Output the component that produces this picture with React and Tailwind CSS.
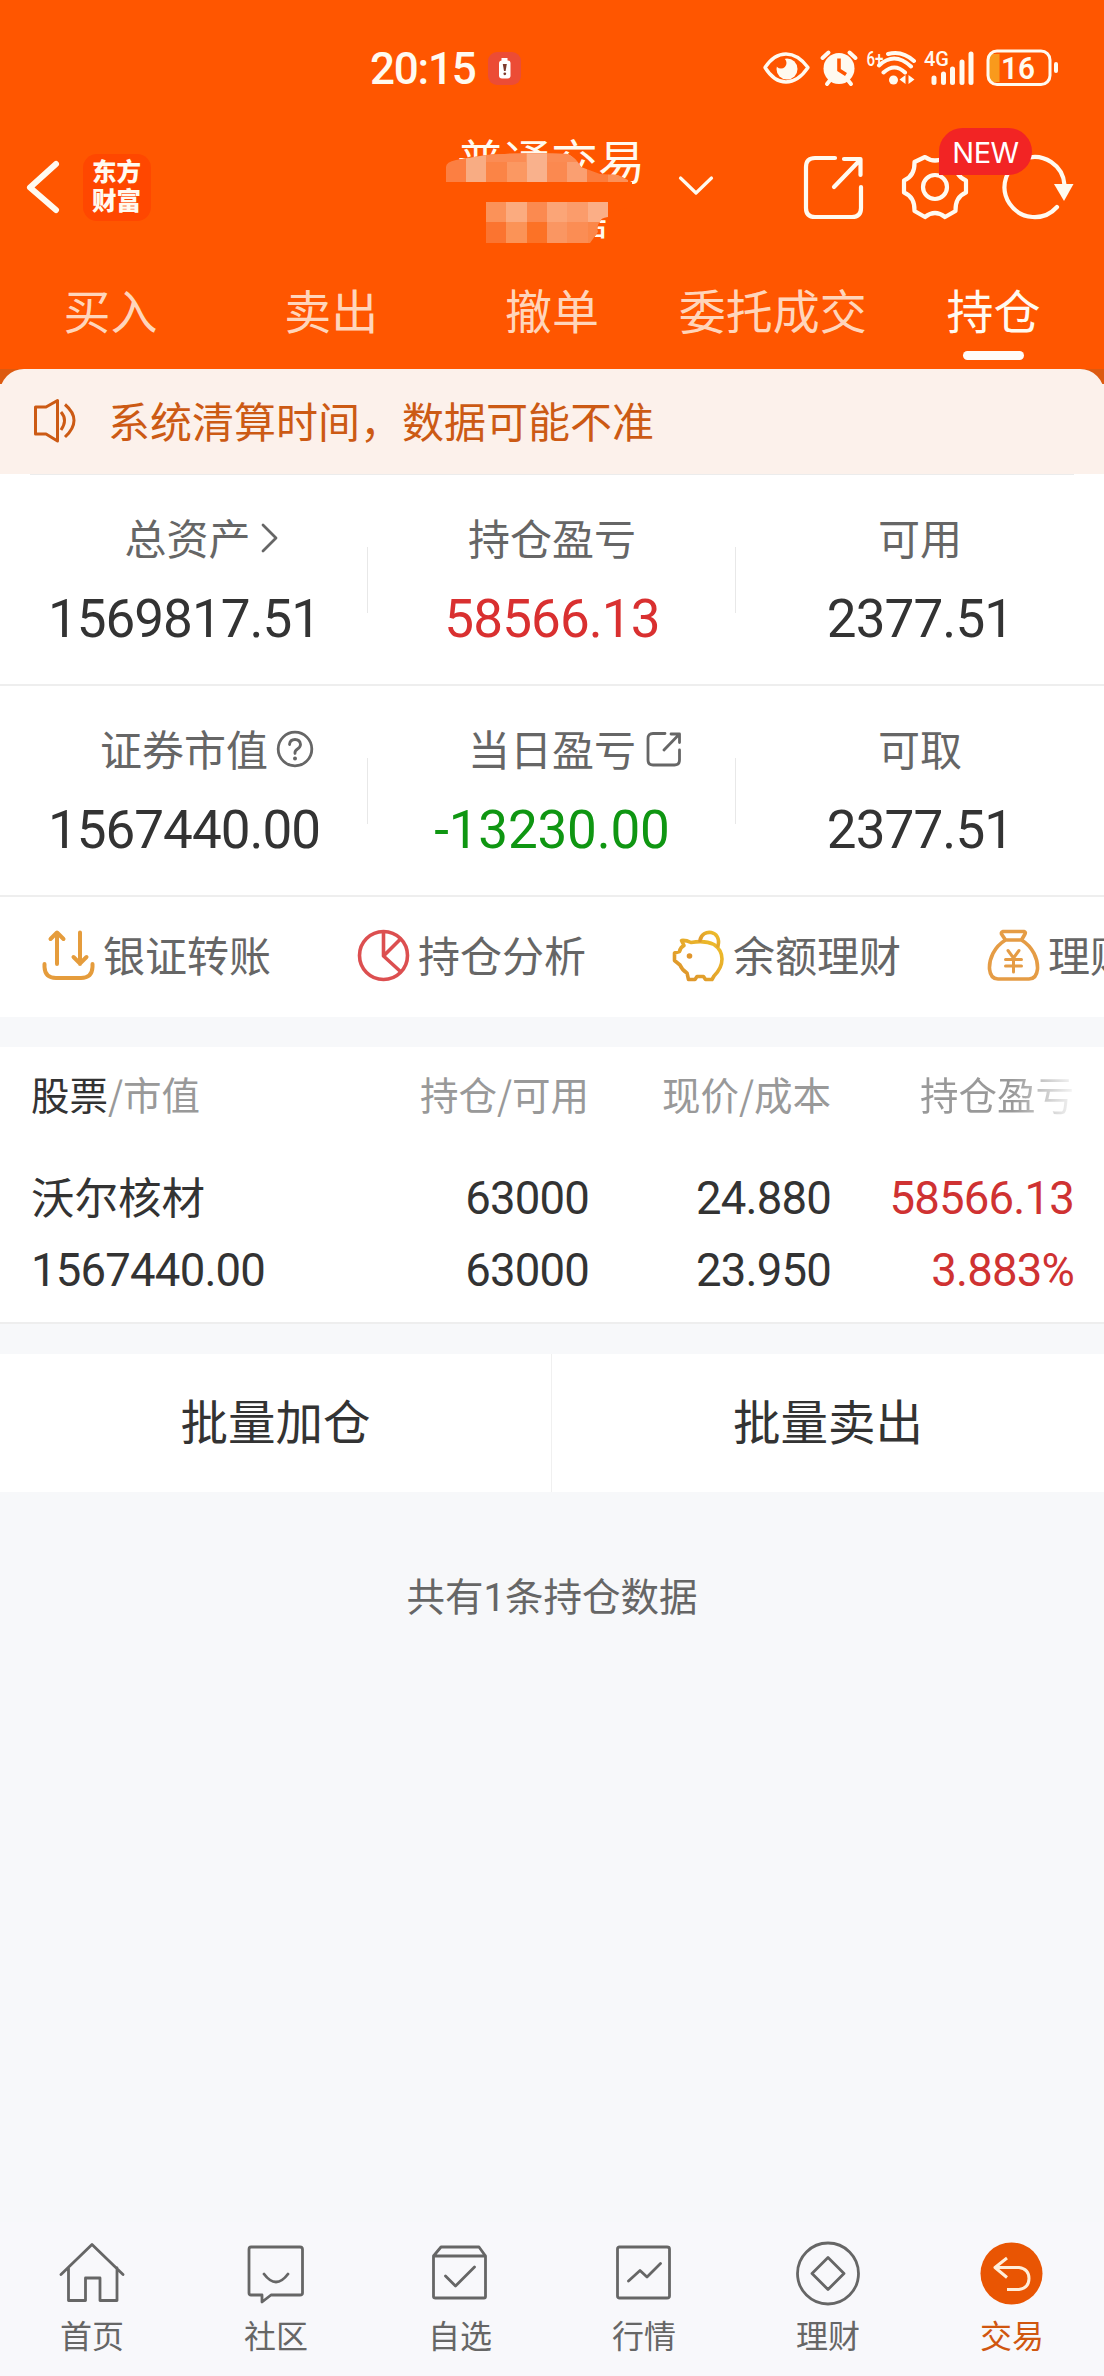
import React from "react";

const CJK = "font-['Noto_Sans_CJK_SC',sans-serif]";
const NUM = "font-[Roboto,'Noto_Sans_CJK_SC',sans-serif]";

function StatusBar() {
  return (
    <div className="flex h-[120px] items-start pl-[370px] text-[#fffaf0]">
      <span className={`${NUM} mt-[47px] w-[106px] text-[44px] leading-[44px] font-medium tracking-[-1.2px]`}>20:15</span>
      <svg className="mt-[52px] ml-[12px] h-[33px] w-[33px]" viewBox="0 0 33 33">
        <rect width="33" height="33" rx="9" fill="#ec4c35" />
        <rect x="13.5" y="6" width="6" height="3" fill="#fff" />
        <rect x="11" y="8.500" width="11.500" height="18" rx="3" fill="#fff" />
        <path d="M14.800 12h4l-1.200 7h-1.600z" fill="#7d3b2c" />
        <circle cx="16.800" cy="21.800" r="1.400" fill="#7d3b2c" />
      </svg>
      <svg className="mt-[48px] ml-[241px] h-[40px] w-[300px]" viewBox="0 0 300 40" fill="none" stroke="#fffaf0">
        <path d="M3 19.500Q12 6 24 6t22 13.500Q36 34 24 34T3 19.500z" strokeWidth="3.400" strokeLinejoin="round" />
        <circle cx="25" cy="21" r="10.500" fill="#fffaf0" stroke="none" />
        <circle cx="19" cy="15" r="5.500" fill="#ff5600" stroke="none" />
        <circle cx="77" cy="20.500" r="15.500" fill="#fffaf0" stroke="none" />
        <path d="M60.500 10l6-5.500M93.500 10l-6-5.500M65 36l4-5M89 36l-4-5" strokeWidth="4" strokeLinecap="round" />
        <path d="M77 10.500v11.500l7 4.500" stroke="#ff5600" strokeWidth="3.600" />
        <text x="104.500" y="17.500" fontSize="20" fontWeight="500" fill="#fffaf0" stroke="none" className="font-[Roboto,sans-serif]" textLength="17" lengthAdjust="spacingAndGlyphs">6+</text>
        <path d="M126 6Q140 2 152 13M117 17.500Q132.500 3 149 18.500M121.500 24.500Q132.500 14.500 143 24.500" strokeWidth="4" strokeLinecap="round" />
        <circle cx="131.500" cy="32" r="4.500" fill="#fffaf0" stroke="none" />
        <path d="M143.500 27v9l-6-4.500zM146.500 27v9l6-4.500z" fill="#fffaf0" stroke="none" />
        <text x="162" y="18" fontSize="21" fontWeight="500" fill="#fffaf0" stroke="none" className="font-[Roboto,sans-serif]" textLength="25" lengthAdjust="spacingAndGlyphs">4G</text>
        <path d="M172 30v4.500M181.500 26v8.500M190.500 21v13.500M200 14v20.500M209 6v28.500" strokeWidth="5" strokeLinecap="round" />
        <path d="M226 6h11.500v28H230q-4 0-4-6z" fill="#f99a1c" stroke="none" />
        <rect x="226" y="3" width="62" height="33.500" rx="9" strokeWidth="3" />
        <rect x="292" y="14" width="4" height="11" rx="2" fill="#fffaf0" stroke="none" />
        <text x="239" y="30.500" fontSize="32" fontWeight="600" fill="#fffaf0" stroke="none" className="font-[Roboto,sans-serif]" textLength="34" lengthAdjust="spacingAndGlyphs">16</text>
      </svg>
    </div>
  );
}

const mosaicTop = ["#fc7f42", "#f8ac83", "#fb8446", "#fb9862", "#f9b18c", "#fb8950", "#fa9f71", "#fc7c3c", "#fb9159"];
const mosaicA = ["#fb9259", "#fbab7f", "#fb8a50", "#fba577", "#fb9c6b", "#fbae86"];
const mosaicB = ["#fb7430", "#fb9357", "#fc7226", "#fa9662", "#fb8d54", "#fb8749"];

function NavBar() {
  return (
    <div className="relative flex h-[141px] items-start">
      <svg className="mt-[38px] ml-[25px] h-[60px] w-[36px]" viewBox="0 0 36 60" fill="none" stroke="#fffaf0" strokeWidth="6" strokeLinecap="round" strokeLinejoin="round">
        <path d="M31 6L5 29.500L31 52" />
      </svg>
      <div className="mt-[34px] ml-[22px] h-[67px] w-[68px] rounded-[14px] bg-[#ff4700] pt-[2px] pl-[9px] font-['Noto_Sans_CJK_SC',sans-serif] text-[24.5px] leading-[29px] font-black text-[#fffaf0]">
        <p className="w-[52px] break-all">东方财富</p>
      </div>
      <div className="relative ml-[235px] h-[140px] w-[280px]">
        <div className={`${CJK} pt-[15px] pl-[71px] text-[47px] leading-[47px] whitespace-nowrap text-[#fffaf0]`}>普通交易</div>
        <div className={`${CJK} pt-[25px] pl-[193px] text-[30px] leading-[30px] font-medium text-[#fffaf0]`}>吉</div>
        <svg className="absolute inset-0 h-[140px] w-[280px]" viewBox="386 120 280 140" shapeRendering="crispEdges">
          <defs>
            <clipPath id="blotTop">
              <path d="M446 167Q446 162 456 160L486 155Q530 152 568 154Q576 158 581 167L600 174L618 175L632 182V206H446z" />
            </clipPath>
            <clipPath id="blotBottom">
              <path d="M446 190H628V208L608 213V217Q600 218 600 222Q596 225 598 232L590 243H486V222H446z" />
            </clipPath>
          </defs>
          <g clipPath="url(#blotTop)">
            <rect x="446" y="150" width="200" height="56" fill="#ff5600" />
            {mosaicTop.map((c, i) => <rect key={i} x={446 + i * 20.200} y="150" width="20.200" height="32" fill={c} />)}
            <rect x="486" y="150" width="40" height="12" fill="#fb8c54" />
            <rect x="547" y="150" width="40" height="12" fill="#fb8c54" />
          </g>
          <g clipPath="url(#blotBottom)">
            <rect x="446" y="182" width="186" height="62" fill="#ff5600" />
            {mosaicA.map((c, i) => <rect key={i} x={486 + i * 20.300} y="202" width="20.300" height="20.500" fill={c} />)}
            {mosaicB.map((c, i) => <rect key={i} x={486 + i * 20.300} y="222" width="20.300" height="21" fill={c} />)}
          </g>
        </svg>
      </div>
      <svg className="mt-[55px] ml-[11px] h-[22px] w-[38px]" viewBox="0 0 38 22" fill="none" stroke="#fffaf0" strokeWidth="3.200" strokeLinecap="round" strokeLinejoin="round">
        <path d="M3.500 3L19 18L34.500 3" />
      </svg>
      <svg className="mt-[32px] ml-[86px] h-[70px] w-[66px]" viewBox="0 0 66 70" fill="none" stroke="#fffaf0" strokeWidth="4.200" strokeLinecap="round" strokeLinejoin="round">
        <path d="M34 6H14Q5 6 5 15V56Q5 65 14 65H51Q60 65 60 56V35M43 7H59.500V23M59 8L33 35" />
      </svg>
      <svg className="mt-[33px] ml-[33px] h-[68px] w-[70px]" viewBox="0 0 70 68" fill="none" stroke="#fffaf0" strokeWidth="4.200" strokeLinejoin="round">
        <path d="M25 4Q35 11 45 4L55.500 9Q55 23 66 27.500V39.500Q55 44 55.500 58L45 64Q35 56 25 64L14.500 58Q15 44 4 39.500V27.500Q15 23 14.500 9z" />
        <circle cx="35" cy="34" r="12" />
      </svg>
      <svg className="mt-[31px] ml-[30px] h-[72px] w-[76px]" viewBox="0 0 76 72" fill="none" stroke="#fffaf0" strokeWidth="4.200" strokeLinecap="round">
        <path d="M57 56A30 30 0 1 1 64.500 34" />
        <path d="M54 33H73.500L64 50z" fill="#fffaf0" stroke="none" />
      </svg>
      <div className="absolute top-[8px] left-[939px] flex h-[47px] w-[93px] items-center justify-center rounded-[24px] rounded-bl-none bg-[#f22424] pt-[2px] font-[Inter,sans-serif] text-[29px] leading-none tracking-[-0.5px] text-white">NEW</div>
    </div>
  );
}

const tabs = ["买入", "卖出", "撤单", "委托成交", "持仓"];

function Tabs() {
  return (
    <div className={`${CJK} grid h-[108px] grid-cols-5 text-[47px] leading-[47px]`}>
      {tabs.map((t) =>
        t === "持仓" ? (
          <div key={t} className="flex flex-col items-center pt-[24px] text-[#fffaf0]">
            <span>{t}</span>
            <i className="mt-[19px] h-[9px] w-[61px] rounded-full bg-[#fffcf8]" />
          </div>
        ) : (
          <div key={t} className="pt-[24px] text-center whitespace-nowrap text-[#ffd5bb]">{t}</div>
        ),
      )}
    </div>
  );
}

function Notice() {
  return (
    <div className="bg-[linear-gradient(#dd5a10_15px,#fcf1eb_15px)]">
      <div className={`${CJK} flex h-[105px] items-center rounded-t-[24px] bg-[#fcf1eb] text-[42px] leading-[42px] text-[#cc5a14]`}>
        <svg className="mb-[2px] ml-[31px] h-[46px] w-[46px]" viewBox="0 0 46 46" fill="none" stroke="#cc5a14" strokeWidth="3" strokeLinejoin="round">
          <path d="M4.500 9H15L26.500 2.500V43L15 36H4.500zM30 14Q37 22 30 32M34 6.500Q52 22 34 39" />
        </svg>
        <span className="mb-[3px] ml-[31px]">系统清算时间，数据可能不准</span>
      </div>
    </div>
  );
}

const chevron = (
  <svg className="absolute top-[6px] left-full ml-[9px] h-[32px] w-[20px]" viewBox="0 0 20 32" fill="none" stroke="#666" strokeWidth="2.800" strokeLinecap="round" strokeLinejoin="round">
    <path d="M3 3L16 16L3 29" />
  </svg>
);
const question = (
  <svg className="absolute top-[3px] left-full ml-[8px] h-[38px] w-[38px]" viewBox="0 0 38 38" fill="none" stroke="#666" strokeWidth="2.800" strokeLinecap="round">
    <circle cx="19" cy="19" r="16.800" />
    <path d="M13.500 14.500Q14 9.500 19 9.500T24.500 14.500Q24.500 17 21.500 19T19 23.500" />
    <circle cx="19" cy="28.500" r="2" fill="#666" stroke="none" />
  </svg>
);
const share = (
  <svg className="absolute top-[4px] left-full ml-[9px] h-[38px] w-[38px]" viewBox="0 0 38 38" fill="none" stroke="#666" strokeWidth="2.800" strokeLinecap="round" strokeLinejoin="round">
    <path d="M20 2.500H8Q3 2.500 3 7.500V29Q3 34 8 34H29.500Q34.500 34 34.500 29V19M26 3H34.500V11.500M34 3.500L19 19" />
  </svg>
);

const stats = [
  [
    { label: "总资产", value: "1569817.51", icon: chevron, color: "text-[#333] tracking-[-1px]", shift: "ml-[7px]" },
    { label: "持仓盈亏", value: "58566.13", color: "text-[#d93030] tracking-[-0.9px]" },
    { label: "可用", value: "2377.51", color: "text-[#333] tracking-[-0.9px]" },
  ],
  [
    { label: "证券市值", value: "1567440.00", icon: question, color: "text-[#333] tracking-[-1px]" },
    { label: "当日盈亏", value: "-13230.00", icon: share, color: "text-[#0f9612] tracking-[-0.2px]" },
    { label: "可取", value: "2377.51", color: "text-[#333] tracking-[-0.9px]" },
  ],
];

function Stats() {
  return (
    <div className="bg-white">
      <div className="mx-[30px] h-px bg-[#ececec]" />
      {stats.map((row, r) => (
        <div key={r} className="grid h-[211px] grid-cols-3 border-b-2 border-[#eee]">
          {row.map((s, i) => (
            <div key={s.label} className="relative flex flex-col items-center pt-[41px]">
              <span className={`${CJK} ${s.shift || ""} relative text-[42px] leading-[42px] text-[#666]`}>
                {s.label}
                {s.icon}
              </span>
              <span className={`${NUM} mt-[35px] text-[53px] leading-[53px] ${s.color}`}>{s.value}</span>
              {i < 2 && <i className="absolute top-[72px] right-0 h-[66px] w-px bg-[#e8e8e8]" />}
            </div>
          ))}
        </div>
      ))}
    </div>
  );
}

function TransferIcon() {
  return (
    <svg className="h-[54px] w-[54px]" viewBox="0 0 54 54" fill="none" stroke="#e59c3c" strokeWidth="4" strokeLinecap="round" strokeLinejoin="round">
      <path d="M3.500 35V38Q4 49 15 49H40Q51 49 51.500 38V35M16 35V4M9.500 10L16 3.500L22.500 10M39 3.500V35M32.500 28L39 34.500L45.500 28" />
    </svg>
  );
}
function PieIcon() {
  return (
    <svg className="h-[54px] w-[54px]" viewBox="0 0 54 54" fill="none" stroke="#dc4f50" strokeWidth="3.600" strokeLinejoin="round">
      <circle cx="27.500" cy="26.500" r="24" />
      <path d="M27.500 3V27L45 43M27.500 27L44 10.500" />
    </svg>
  );
}
function PigIcon() {
  return (
    <svg className="h-[54px] w-[54px]" viewBox="0 0 54 54" fill="none" strokeWidth="3.600" strokeLinejoin="round" strokeLinecap="round">
      <defs>
        <linearGradient id="pig" x1="1" y1="0" x2="0" y2="1">
          <stop offset="0" stopColor="#efc02a" />
          <stop offset="1" stopColor="#db8f2c" />
        </linearGradient>
      </defs>
      <g stroke="url(#pig)">
        <path d="M20 13.500Q34 11 43 15.500Q51 21 51 30Q51 39 43 47L41 50.500H34.500L32.500 47.500H26L24 50.500H17.500L16 44Q11 41 9 36L3.500 31.500V24L8.500 22.500Q9.500 18 13 16.500L10.500 11.500Q15 11 20 13.500z" />
        <path d="M29 11.500C31 -1 51 1 47 17" />
      </g>
      <circle cx="18.500" cy="27" r="2.800" fill="#e0952c" />
    </svg>
  );
}
function BagIcon() {
  return (
    <svg className="h-[54px] w-[54px]" viewBox="0 0 54 54" fill="none" stroke="#e59c45" strokeWidth="3.600" strokeLinejoin="round" strokeLinecap="round">
      <path d="M17 2.500H38Q40 3 39 5L35.500 11H19.500L15.500 5Q15 3 17 2.500zM19.500 11C8 18 3 30 3.500 40Q4.500 50 12 50H43Q50.500 50 51.500 40C52 30 47 18 35.500 11" />
      <path d="M22 21.500L27.500 29L33 21.500M27.500 29.500V43M19.500 30.500H35.500M19.500 37H35.500" strokeWidth="3" />
    </svg>
  );
}

const tools = [
  ["银证转账", TransferIcon],
  ["持仓分析", PieIcon],
  ["余额理财", PigIcon],
  ["理财产品", BagIcon],
];

function Toolbar() {
  return (
    <div className={`${CJK} flex h-[120px] overflow-hidden bg-white pl-[41px] text-[42px] leading-[42px] text-[#666]`}>
      {tools.map(([label, Icon]) => (
        <div key={label} className="flex w-[315px] shrink-0 items-start pt-[32px]">
          <Icon />
          <span className="mt-[4px] ml-[8px] whitespace-nowrap">{label}</span>
        </div>
      ))}
    </div>
  );
}

function Holdings() {
  const cols = "grid grid-cols-[307px_251px_242px_243px] px-[31px]";
  return (
    <div className="mt-[30px] h-[277px] border-b-2 border-[#eee] bg-white">
      <div className={`${CJK} ${cols} h-[116px] pt-[27px] text-right text-[38.5px] leading-[39px] text-[#999]`}>
        <div className="text-left"><span className="text-[#333]">股票</span>/市值</div>
        <div>持仓/可用</div>
        <div>现价/成本</div>
        <div><span className="bg-[linear-gradient(90deg,#999_60%,#fff_104%)] bg-clip-text text-transparent">持仓盈亏</span></div>
      </div>
      <div className={`${NUM} ${cols} text-right text-[45.5px] leading-[72px] tracking-[-0.8px] text-[#333]`}>
        <div className={`${CJK} -mt-[3px] text-left text-[43.5px] tracking-normal`}>沃尔核材</div>
        <div>63000</div>
        <div>24.880</div>
        <div className="text-[#cf3232]">58566.13</div>
        <div className="text-left">1567440.00</div>
        <div>63000</div>
        <div>23.950</div>
        <div className="text-[#cf3232]">3.883%</div>
      </div>
    </div>
  );
}

function BatchActions() {
  return (
    <div className={`${CJK} mt-[30px] grid h-[138px] grid-cols-2 bg-white text-center text-[47.5px] leading-[48px] text-[#333]`}>
      <div className="border-r border-[#f0f0f0] pt-[42px]">批量加仓</div>
      <div className="pt-[42px]">批量卖出</div>
    </div>
  );
}

const navItems = [
  ["首页", <path d="M4 35.500L35 5.500L66 35.500M11.500 29V61.500H28.500V39H43V61.500H60V29" />],
  ["社区", <path d="M10 8H59Q61.500 8 61.500 10.500V54Q61.500 56 59 56H30L21 63V56H10Q8 56 8 54V10.500Q8 8 10 8zM23 35Q35 51 47 35" />],
  ["自选", <path d="M8.500 17V57.500Q8.500 59 10.500 59H59Q60.500 59 60.500 57.500V17L54 8H16zM8.500 17H60.500M20.500 37L30.500 47L49.500 28" />],
  ["行情", <path d="M10.500 8H58Q60.500 8 60.500 10V57Q60.500 59 58 59H10.500Q8.500 59 8.500 57V10Q8.500 8 10.500 8zM19.500 42L31 31.500L38 38L51.500 24.500" />],
  ["理财", <g><circle cx="35" cy="34.500" r="30.500" /><path d="M35 18.500L51 34.500L35 50.500L19 34.500z" /></g>],
  ["交易", <g><circle cx="34.500" cy="34.500" r="31" fill="#e95503" stroke="none" /><path d="M30 19L18 28.500L30 38.500M19 28.500H42Q52 30 52 39.500T42 50.500H30" stroke="#ffeeda" strokeWidth="3" strokeLinecap="butt" /></g>],
];

function BottomNav() {
  return (
    <div className={`${CJK} mt-auto grid h-[154px] grid-cols-6 bg-[#f8f8fb] text-[32px] leading-[32px] text-[#666]`}>
      {navItems.map(([label, art]) => (
        <div key={label} className={label === "交易" ? "flex flex-col items-center pt-[17px] text-[#d0560f]" : "flex flex-col items-center pt-[17px]"}>
          <svg className="h-[70px] w-[70px]" viewBox="0 0 70 70" fill="none" stroke="#666" strokeWidth="2.800" strokeLinejoin="round" strokeLinecap="round">{art}</svg>
          <span className="mt-[9px]">{label}</span>
        </div>
      ))}
    </div>
  );
}

export default function App() {
  return (
    <div className="flex h-[2376px] w-[1104px] flex-col overflow-hidden bg-[#f7f8fa]">
      <div className="bg-[#ff5600]">
        <StatusBar />
        <NavBar />
        <Tabs />
      </div>
      <Notice />
      <Stats />
      <Toolbar />
      <Holdings />
      <BatchActions />
      <div className={`${CJK} mt-[83px] text-center text-[38.5px] leading-[39px] text-[#666]`}>
        共有<span className="font-[Roboto,sans-serif]">1</span>条持仓数据
      </div>
      <BottomNav />
    </div>
  );
}
